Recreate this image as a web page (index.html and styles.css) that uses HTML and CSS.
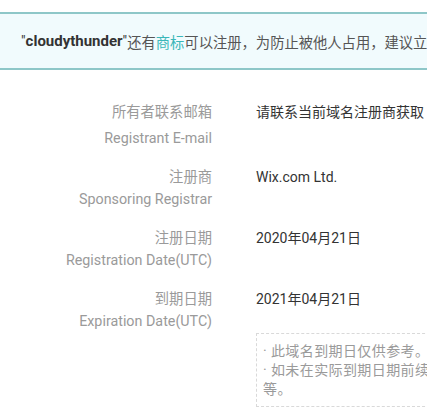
FILE: index.html
```html
<!DOCTYPE html>
<html lang="zh">
<head>
<meta charset="utf-8">
<link rel="stylesheet" href="styles.css">
</head>
<body>
<div class="page">
  <div class="banner">
    <span class="q">"<b>cloudythunder</b>"</span>还有<a class="link">商标</a>可以注册，为防止被他人占用，建议立即注册保护您的品牌
  </div>
  <div class="rows">
    <div class="row row-first">
      <div class="label"><div class="zh">所有者联系邮箱</div><div class="en">Registrant E-mail</div></div>
      <div class="value">请联系当前域名注册商获取</div>
    </div>
    <div class="row">
      <div class="label"><div class="zh">注册商</div><div class="en">Sponsoring Registrar</div></div>
      <div class="value">Wix.com Ltd.</div>
    </div>
    <div class="row">
      <div class="label"><div class="zh">注册日期</div><div class="en">Registration Date(UTC)</div></div>
      <div class="value">2020年04月21日</div>
    </div>
    <div class="row">
      <div class="label"><div class="zh">到期日期</div><div class="en">Expiration Date(UTC)</div></div>
      <div class="value">
        <div>2021年04月21日</div>
        <div class="note">
          <div>· 此域名到期日仅供参考。</div>
          <div>· 如未在实际到期日期前续费，域名可能会被删除、<br>等。</div>
        </div>
      </div>
    </div>
  </div>
</div>
</body>
</html>
```

FILE: styles.css
```css
html, body {
  margin: 0;
  padding: 0;
  background: #ffffff;
  overflow: hidden;
}
body {
  font-family: Roboto, "Noto Sans CJK SC", sans-serif;
  width: 427px;
  height: 417px;
}
.page {
  width: 427px;
  overflow: hidden;
  padding-top: 12px;
}
.banner {
  box-sizing: border-box;
  height: 58px;
  background: #f1fbfd;
  border-top: 2px solid #8ec7c8;
  border-bottom: 2px solid #8ec7c8;
  display: flex;
  align-items: center;
  padding-left: 21px;
  font-size: 14.3px;
  color: #555;
  white-space: nowrap;
}
.banner b {
  color: #333;
  font-weight: 700;
  font-size: 15px;
}
.q { color: #333; }
.link {
  color: #3ab7b9;
  text-decoration: none;
}
.rows {
  padding-top: 32px;
  display: flex;
  flex-direction: column;
  gap: 18px;
}
.row {
  display: grid;
  grid-template-columns: 212px 400px;
  column-gap: 44px;
  align-items: start;
}
.label {
  text-align: right;
  color: #9a9a9a;
  font-size: 14.3px;
}
.zh { line-height: 20px; }
.en { line-height: 22px; margin-top: 1px; }
.row-first .en { margin-top: 5px; }
.value {
  color: #333;
  font-size: 14px;
  line-height: 20px;
  white-space: nowrap;
}
.note {
  margin-top: 24px;
  width: 300px;
  border: 1px dashed #d9d9d9;
  padding: 8px 7px 7px 6px;
  color: #9a9a9a;
  font-size: 14px;
  line-height: 19px;
  letter-spacing: 0.4px;
}
```
